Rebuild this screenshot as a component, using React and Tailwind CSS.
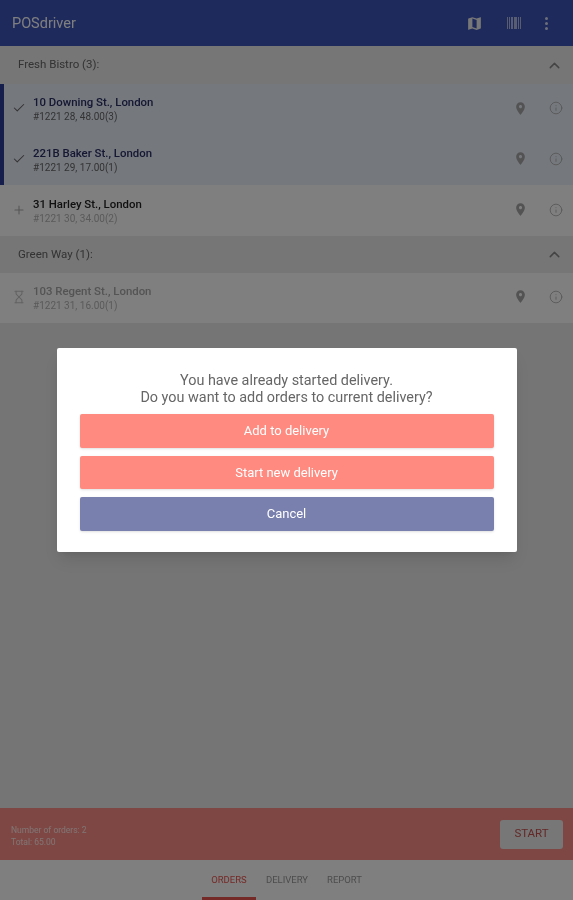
import { Check, Plus, Hourglass, Info, ChevronUp } from "lucide-react";

const font = { fontFamily: "Roboto, sans-serif" };

function Pin() {
  return (
    <svg viewBox="0 0 24 24" className="w-[15px] h-[15px] fill-[#a6a6a6]">
      <path d="M12 2C8.13 2 5 5.13 5 9c0 5.25 7 13 7 13s7-7.75 7-13c0-3.87-3.13-7-7-7zm0 9.5c-1.38 0-2.5-1.12-2.5-2.5s1.12-2.5 2.5-2.5 2.5 1.12 2.5 2.5-1.12 2.5-2.5 2.5z" />
    </svg>
  );
}

function GroupHeader({ title, tall }) {
  return (
    <div className={"bg-[#ececec] flex items-center justify-between pl-[18px] pr-[10px] shrink-0 " + (tall ? "h-[38px]" : "h-[37px]")}>
      <span className="text-[11.5px] text-[#666]">{title}</span>
      <ChevronUp className="w-[17px] h-[17px] text-[#888]" strokeWidth={2} />
    </div>
  );
}

function OrderRow({ icon, title, sub, selected, dim, short }) {
  const Icon = icon;
  const iconColor = selected ? "text-[#666]" : dim ? "text-[#c4c4c4]" : "text-[#aaa]";
  const titleColor = selected ? "text-[#2a2f66]" : dim ? "text-[#a8a8a8]" : "text-[#222]";
  return (
    <div className={"flex items-center shrink-0 border-l-[4px] " + (short ? "h-[50px] " : "h-[50.67px] ") + (selected ? "bg-[#eaf0fa] border-[#2c3e99]" : "bg-white border-transparent")}>
      <div className="w-[29px] flex justify-center pb-[2px]">
        <Icon className={"w-[14px] h-[14px] " + iconColor} strokeWidth={1.8} />
      </div>
      <div className="flex-1 min-w-0 pt-[1px]">
        <div className={"text-[11.4px] font-medium leading-[14px] " + titleColor}>{title}</div>
        <div className={"text-[10px] leading-[14px] mt-[1px] " + (selected ? "text-[#666]" : "text-[#b4b4b4]")}>{sub}</div>
      </div>
      <div className="flex items-center gap-[21px] pr-[10px] pb-[2px]">
        <Pin />
        <Info className="w-[14px] h-[14px] text-[#aaa]" strokeWidth={1.4} />
      </div>
    </div>
  );
}

export default function App() {
  return (
    <div className="relative w-[573px] h-[900px] overflow-hidden bg-[#ebebeb] flex flex-col blur-[0.6px]" style={font}>
      {/* App bar */}
      <div className="h-[46px] bg-[#3c52b8] flex items-center justify-between pl-[12px] pr-[25px] shrink-0 shadow-md">
        <span className="text-[14.5px] text-white pt-[2px]">POSdriver</span>
        <div className="flex items-center gap-[24px]">
          <svg viewBox="0 0 24 24" className="w-[17px] h-[17px] fill-[#eee]">
            <path d="M20.5 3l-.16.03L15 5.1 9 3 3.36 4.9c-.21.07-.36.25-.36.48V20.5c0 .28.22.5.5.5l.16-.03L9 18.9l6 2.1 5.64-1.9c.21-.07.36-.25.36-.48V3.5c0-.28-.22-.5-.5-.5zM15 19l-6-2.11V5l6 2.11V19z" />
          </svg>
          {/* barcode, reads as a soft block in the picture */}
          <div className="w-[14px] h-[12px] flex gap-[1px] opacity-60 blur-[0.5px]">
            <div className="w-[2px] bg-white" />
            <div className="w-[1px] bg-white" />
            <div className="w-[2px] bg-white" />
            <div className="w-[1px] bg-white" />
            <div className="w-[2px] bg-white" />
            <div className="w-[1px] bg-white" />
            <div className="w-[2px] bg-white" />
          </div>
          <div className="flex flex-col gap-[2px] opacity-80">
            <div className="w-[3px] h-[3px] rounded-full bg-white" />
            <div className="w-[3px] h-[3px] rounded-full bg-white" />
            <div className="w-[3px] h-[3px] rounded-full bg-white" />
          </div>
        </div>
      </div>

      {/* Orders */}
      <GroupHeader title="Fresh Bistro (3):" tall />
      <OrderRow icon={Check} title="10 Downing St., London" sub="#1221 28, 48.00(3)" selected />
      <OrderRow icon={Check} title="221B Baker St., London" sub="#1221 29, 17.00(1)" selected />
      <OrderRow icon={Plus} title="31 Harley St., London" sub="#1221 30, 34.00(2)" />
      <GroupHeader title="Green Way (1):" />
      <OrderRow icon={Hourglass} title="103 Regent St., London" sub="#1221 31, 16.00(1)" dim short />

      <div className="flex-1" />

      {/* Start bar */}
      <div className="h-[52px] bg-[#ff8f88] flex items-center justify-between pl-[11px] pr-[10px] shrink-0">
        <div className="text-[8.5px] leading-[12px] text-white/80 pt-[3px]">
          <div>Number of orders: 2</div>
          <div>Total: 65.00</div>
        </div>
        <button className="w-[63px] h-[29px] rounded-[3px] bg-[#eeeeee] text-[11.5px] text-[#c5524f]">START</button>
      </div>

      {/* Tabs */}
      <div className="h-[40px] bg-white flex justify-center shrink-0 pr-[4px]">
        <div className="relative w-[54px] flex items-center justify-center text-[9.5px] text-[#e8554e]">
          ORDERS
          <div className="absolute bottom-0 inset-x-0 h-[3px] bg-[#e8554e]" />
        </div>
        <div className="w-[45px] ml-[8.5px] flex items-center justify-center text-[9.5px] text-[#999]">DELIVERY</div>
        <div className="w-[45px] ml-[12.5px] flex items-center justify-center text-[9.5px] text-[#999]">REPORT</div>
      </div>

      {/* Dialog */}
      <div className="absolute inset-0 bg-black/50 flex items-center justify-center">
        <div className="w-[460px] h-[204px] bg-white rounded-[2px] shadow-lg px-[23px] pt-[24px]">
          <p className="text-[14.4px] leading-[17px] text-center text-[#666]">
            You have already started delivery.
            <br />
            Do you want to add orders to current delivery?
          </p>
          <div className="flex flex-col gap-[8px] mt-[8px]">
            <button className="h-[33.5px] rounded-[2px] bg-[#ff8a80] text-[13px] text-white shadow-sm">Add to delivery</button>
            <button className="h-[33.5px] rounded-[2px] bg-[#ff8a80] text-[13px] text-white shadow-sm">Start new delivery</button>
            <button className="h-[33.5px] rounded-[2px] bg-[#7a80ae] text-[13px] text-white shadow-sm">Cancel</button>
          </div>
        </div>
      </div>
    </div>
  );
}
